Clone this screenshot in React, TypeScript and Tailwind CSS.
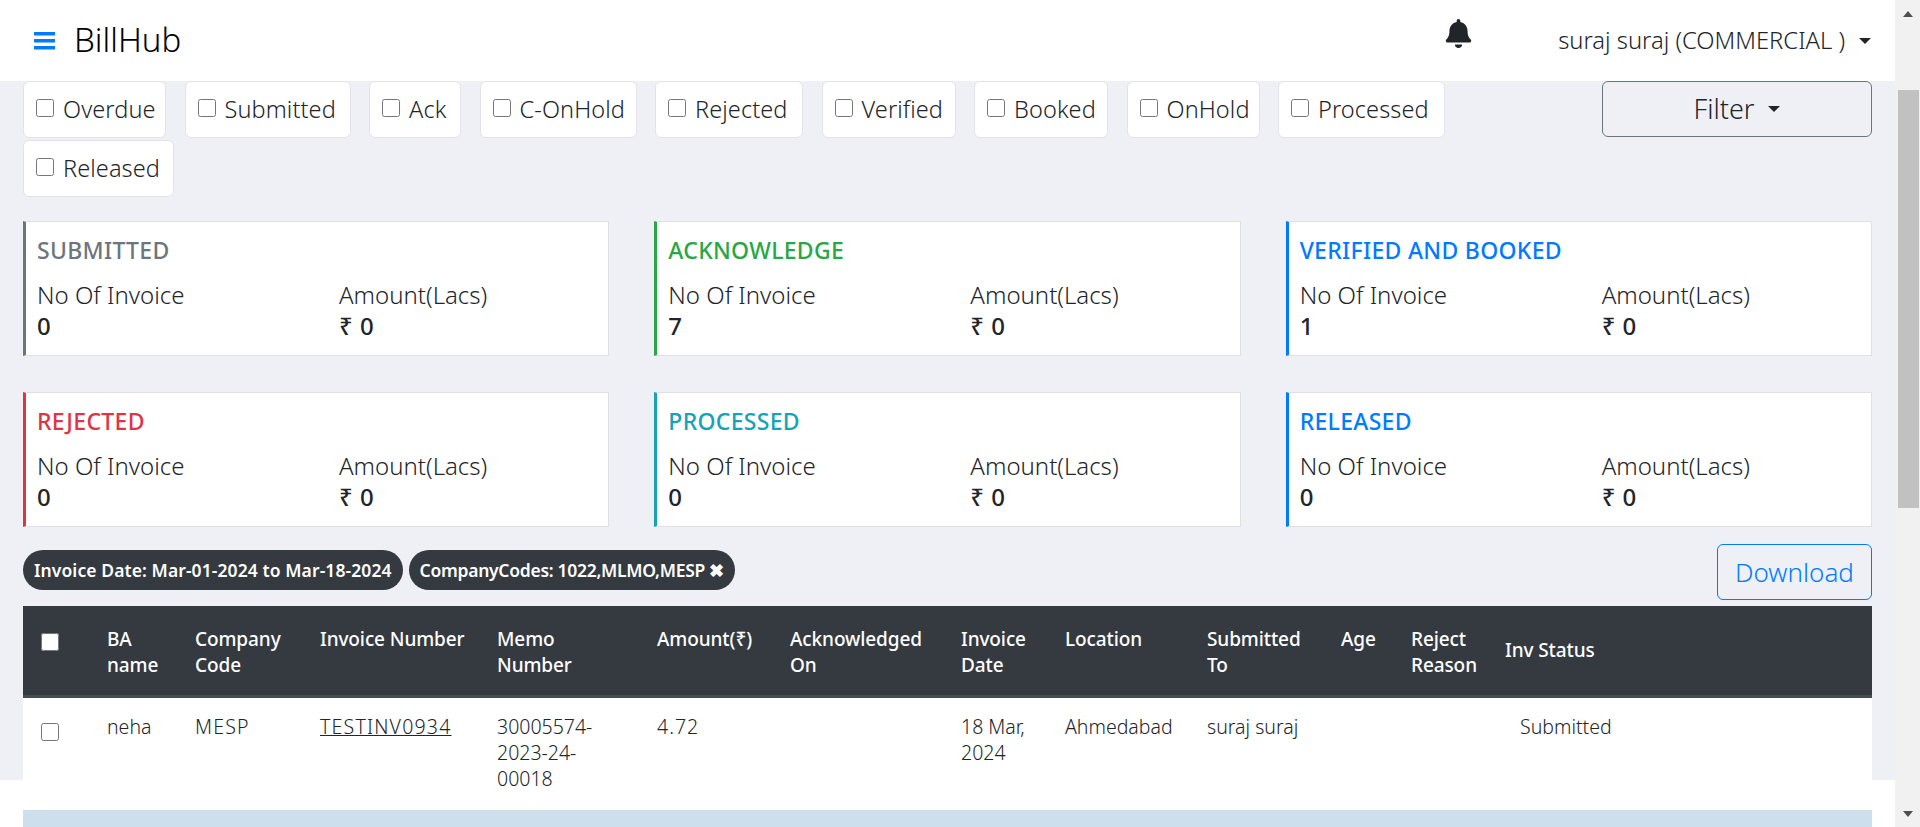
import { FaBell } from 'react-icons/fa'

const filters = [
  { label: 'Overdue', width: 'w-[143px]' },
  { label: 'Submitted', width: 'w-[166px]' },
  { label: 'Ack', width: 'w-[92px]' },
  { label: 'C-OnHold', width: 'w-[157px]' },
  { label: 'Rejected', width: 'w-[148px]' },
  { label: 'Verified', width: 'w-[134px]' },
  { label: 'Booked', width: 'w-[134px]' },
  { label: 'OnHold', width: 'w-[133px]' },
  { label: 'Processed', width: 'w-[167px]' },
  { label: 'Released', width: 'w-[151px]' },
]

const cards = [
  { title: 'SUBMITTED', count: '0', border: 'border-l-[#6c757d]', text: 'text-[#6c757d]' },
  { title: 'ACKNOWLEDGE', count: '7', border: 'border-l-[#28a745]', text: 'text-[#28a745]' },
  { title: 'VERIFIED AND BOOKED', count: '1', border: 'border-l-[#007bff]', text: 'text-[#007bff]' },
  { title: 'REJECTED', count: '0', border: 'border-l-[#dc3545]', text: 'text-[#dc3545]' },
  { title: 'PROCESSED', count: '0', border: 'border-l-[#17a2b8]', text: 'text-[#17a2b8]' },
  { title: 'RELEASED', count: '0', border: 'border-l-[#007bff]', text: 'text-[#007bff]' },
]

function Caret() {
  return <span className="inline-block w-0 h-0 border-x-[6px] border-x-transparent border-t-[6px] border-t-[#212529]" />
}

function Scrollbar() {
  return (
    <div className="w-[25px] shrink-0 bg-[#f1f1f1] flex flex-col items-center">
      <span className="mt-[11px] w-0 h-0 border-x-[5px] border-x-transparent border-b-[6px] border-b-[#505050]" />
      <div className="mt-[73px] w-[21px] ml-[2px] h-[418px] bg-[#c1c1c1]" />
      <span className="mt-[303px] w-0 h-0 border-x-[5px] border-x-transparent border-t-[6px] border-t-[#505050]" />
    </div>
  )
}

export default function App() {
  return (
    <div className="h-screen flex overflow-hidden bg-white text-[#212529] font-['Noto_Sans',sans-serif]">
      <div className="flex-1 min-w-0">
        {/* Header */}
        <header className="h-[81px] bg-white flex items-center pl-[34px] pr-[24px]">
          <svg width="21" height="18" viewBox="0 0 21 18" className="text-[#007bff]" fill="currentColor">
            <rect y="0" width="21" height="3.5" />
            <rect y="7" width="21" height="3.5" />
            <rect y="14" width="21" height="3.5" />
          </svg>
          <span className="ml-[19px] mb-[2px] text-[33px] font-light text-black">BillHub</span>
          <FaBell className="ml-auto mb-[14px] text-[29px] text-[#212529]" />
          <span className="ml-[85px] text-[23.75px] font-light">suraj suraj (COMMERCIAL )</span>
          <span className="ml-[14px] flex"><Caret /></span>
        </header>

        <main className="h-[699px] bg-[#eff0f5] pl-[23px] pr-[23px]">
          {/* Filter pills */}
          <div className="flex items-start justify-between">
            <div className="w-[1480px] flex flex-wrap gap-x-[18.5px] gap-y-[2px]">
              {filters.map((f) => (
                <label key={f.label} className={`${f.width} h-[57px] bg-white border border-[#e2e3e8] rounded-[6px] flex items-center pl-[12px] text-[23.5px] tracking-[0.1px] font-light whitespace-nowrap`}>
                  <input type="checkbox" className="w-[18px] h-[18px] mb-[4px] mr-[9px]" />
                  {f.label}
                </label>
              ))}
            </div>
            <button className="w-[270px] h-[56px] bg-transparent border border-[#6c757d] rounded-[6px] flex items-center justify-center gap-[14px] text-[27px] font-light">
              Filter
              <Caret />
            </button>
          </div>

          {/* Summary cards */}
          <div className="mt-[24px] grid grid-cols-3 gap-x-[45px] gap-y-[36px]">
            {cards.map((c) => (
              <div key={c.title} className={`h-[135px] bg-white border border-[#dfe0e4] border-l-[3px] ${c.border} pl-[11px] pt-[12px]`}>
                <div className={`text-[23px] leading-[32px] font-medium tracking-[0.3px] ${c.text}`}>{c.title}</div>
                <div className="grid grid-cols-[302px_1fr] mt-[14px] text-[24px] leading-[30px] font-light">
                  <div>No Of Invoice</div>
                  <div>Amount(Lacs)</div>
                  <div className="mt-[1px] font-medium text-[24px] tracking-[0.5px]">{c.count}</div>
                  <div className="mt-[1px] font-medium text-[24px] tracking-[0.5px]">₹ 0</div>
                </div>
              </div>
            ))}
          </div>

          {/* Chips + download */}
          <div className="mt-[17px] h-[56px] flex items-start justify-between">
            <div className="mt-[6px] flex gap-[6px] text-white text-[17.5px] font-semibold">
              <span className="h-[40px] px-[11px] rounded-full bg-[#343a40] flex items-center whitespace-nowrap tracking-[0.09px]">Invoice Date: Mar-01-2024 to Mar-18-2024</span>
              <span className="h-[40px] px-[11px] rounded-full bg-[#343a40] flex items-center whitespace-nowrap tracking-[-0.28px]">CompanyCodes: 1022,MLMO,MESP ✖</span>
            </div>
            <button className="w-[155px] h-[56px] border border-[#007bff] rounded-[6px] text-[#007bff] text-[26px] font-light">Download</button>
          </div>

          {/* Invoice table */}
          <table className="mt-[6px] w-[1849px] table-fixed text-[19.5px] leading-[26px]">
            <colgroup>
              <col className="w-[72px]" />
              <col className="w-[88px]" />
              <col className="w-[125px]" />
              <col className="w-[177px]" />
              <col className="w-[160px]" />
              <col className="w-[133px]" />
              <col className="w-[171px]" />
              <col className="w-[104px]" />
              <col className="w-[142px]" />
              <col className="w-[134px]" />
              <col className="w-[70px]" />
              <col className="w-[94px]" />
              <col />
            </colgroup>
            <thead className="bg-[#343a40] text-white text-[19px] tracking-[-0.1px]">
              <tr className="border-b-[3px] border-b-[#454d55] text-left align-top">
                <th className="pl-[18px] pt-[27px] h-[90px]"><input type="checkbox" className="block w-[18px] h-[18px] accent-white" /></th>
                <th className="px-[12px] pt-[20px] font-medium">BA name</th>
                <th className="px-[12px] pt-[20px] font-medium">Company Code</th>
                <th className="px-[12px] pt-[20px] font-medium">Invoice Number</th>
                <th className="pl-[12px] pr-[40px] pt-[20px] font-medium">Memo Number</th>
                <th className="px-[12px] pt-[20px] font-medium">Amount(₹)</th>
                <th className="px-[12px] pt-[20px] font-medium">Acknowledged On</th>
                <th className="px-[12px] pt-[20px] font-medium">Invoice Date</th>
                <th className="px-[12px] pt-[20px] font-medium">Location</th>
                <th className="px-[12px] pt-[20px] font-medium">Submitted To</th>
                <th className="px-[12px] pt-[20px] font-medium">Age</th>
                <th className="px-[12px] pt-[20px] font-medium">Reject Reason</th>
                <th className="px-[12px] align-middle font-medium">Inv Status</th>
              </tr>
            </thead>
            <tbody className="font-light">
              <tr className="bg-white align-top">
                <td className="pl-[18px] pt-[25px] h-[114px]"><input type="checkbox" className="block w-[18px] h-[18px]" /></td>
                <td className="px-[12px] pt-[16px]">neha</td>
                <td className="px-[12px] pt-[16px] tracking-[1.2px]">MESP</td>
                <td className="px-[12px] pt-[16px] tracking-[1.2px]"><a className="underline">TESTINV0934</a></td>
                <td className="pl-[12px] pr-[30px] pt-[16px]">30005574-2023-24-00018</td>
                <td className="px-[12px] pt-[16px] tracking-[1px]">4.72</td>
                <td className="px-[12px] pt-[16px]" />
                <td className="px-[12px] pt-[16px]">18 Mar, 2024</td>
                <td className="px-[12px] pt-[16px]">Ahmedabad</td>
                <td className="px-[12px] pt-[16px]">suraj suraj</td>
                <td className="px-[12px] pt-[16px]" />
                <td className="px-[12px] pt-[16px]" />
                <td className="pl-[27px] pt-[16px]">Submitted</td>
              </tr>
              <tr className="bg-[#cddfec]">
                <td colSpan={13} className="h-[40px]" />
              </tr>
            </tbody>
          </table>
        </main>
      </div>
      <Scrollbar />
    </div>
  )
}
